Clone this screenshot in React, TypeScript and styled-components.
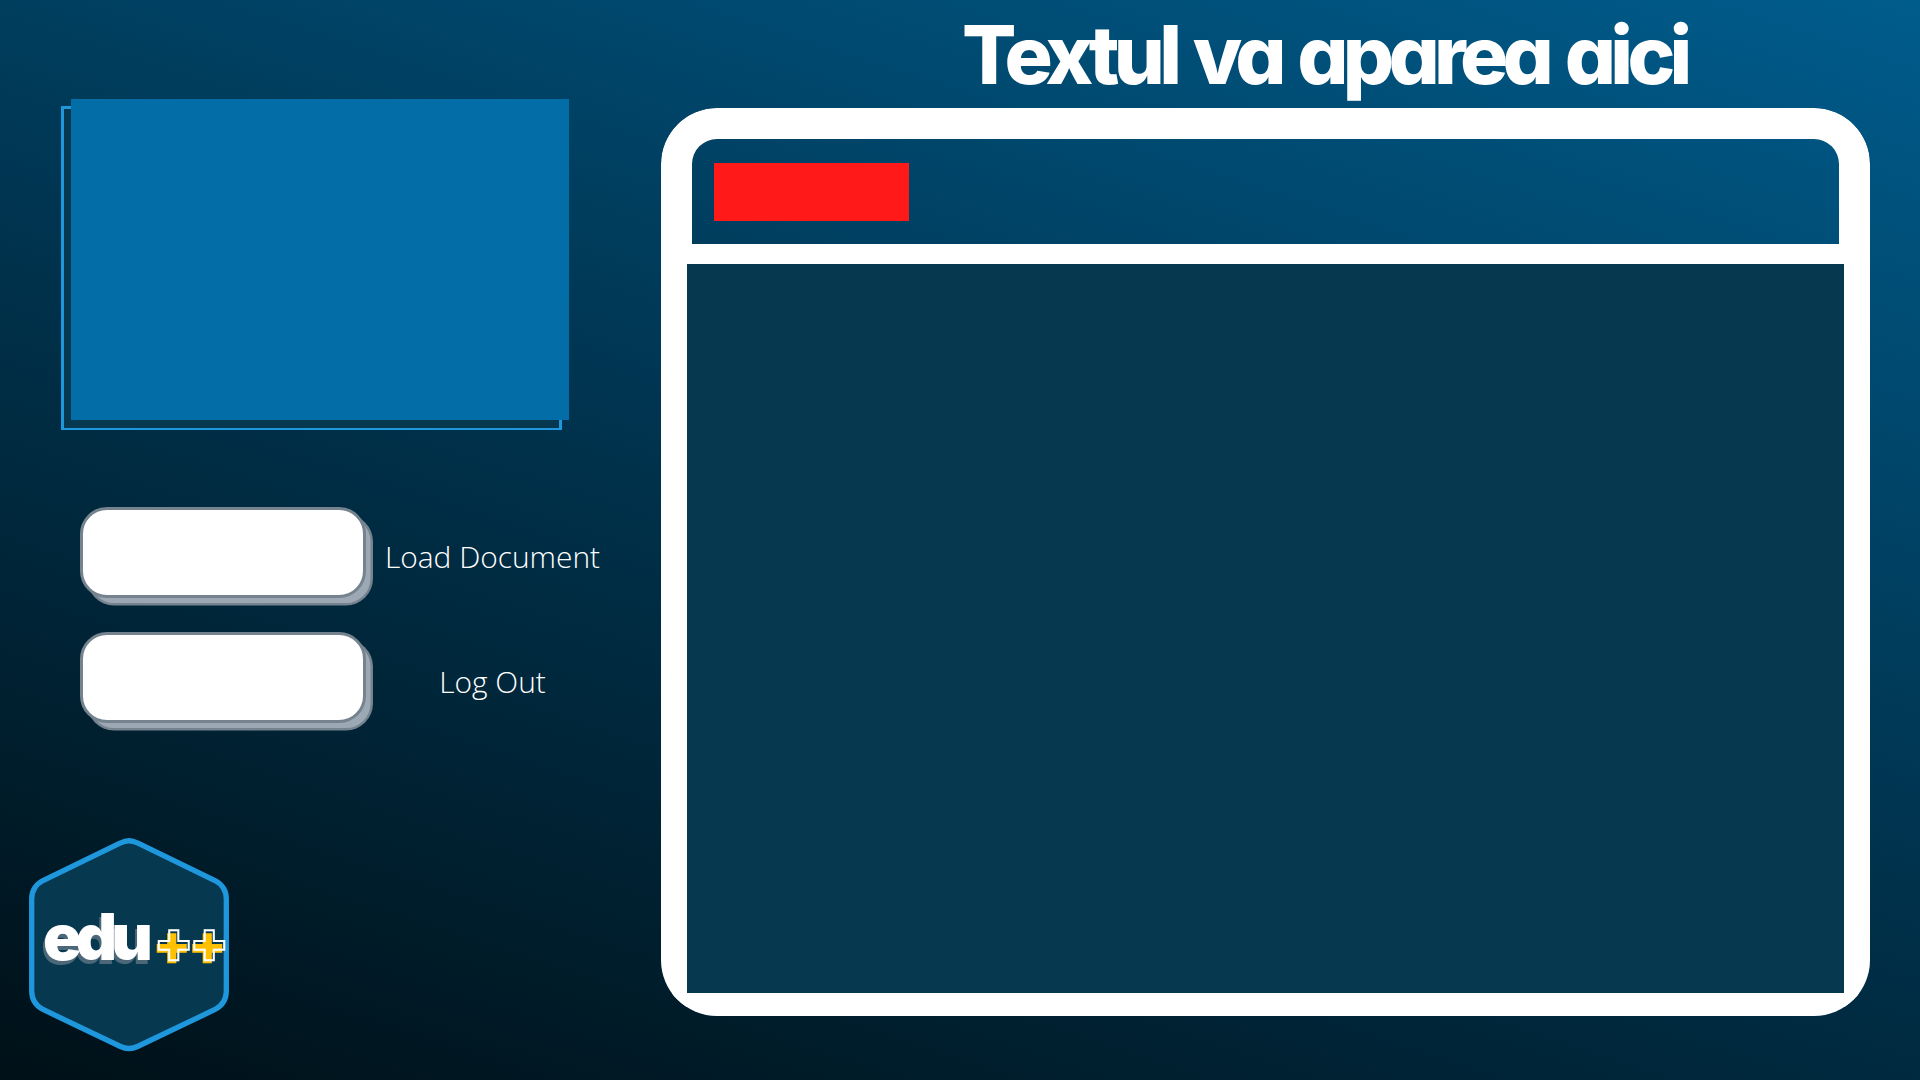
import React from "react";
import styled, { createGlobalStyle } from "styled-components";

const GlobalStyle = createGlobalStyle`
  * { box-sizing: border-box; }
  body { margin: 0; overflow: hidden; }
`;

const Screen = styled.div`
  display: grid;
  grid-template-columns: 661px 1209px;
  width: 1920px;
  height: 1080px;
  overflow: hidden;
  background: linear-gradient(18deg, #001017 0%, #00334e 50%, #005c8c 100%);
  color: #fff;
  font-family: "Open Sans", "Noto Sans", sans-serif;
`;

const Sidebar = styled.aside`
  display: flex;
  flex-direction: column;
  align-items: flex-start;
`;

const Preview = styled.div`
  position: relative;
  width: 501px;
  height: 324px;
  margin: 106px 0 0 61px;
  border: solid #1f97dd;
  border-width: 3px 3px 2px;
  background: #063850;

  &::after {
    content: "";
    position: absolute;
    top: -10px;
    left: 7px;
    width: 498px;
    height: 321px;
    background: #026da6;
  }
`;

const Actions = styled.div`
  display: flex;
  flex-direction: column;
  gap: 34px;
  margin: 77px 0 0 80px;
`;

const ActionRow = styled.div`
  display: flex;
  align-items: center;
`;

const ActionButton = styled.button`
  width: 286px;
  height: 91px;
  padding: 0;
  border: 3px solid #75838f;
  border-radius: 27px;
  background: #fff;
  box-shadow: 7px 7.5px 0 -2.5px #9ca8b4, 7px 7.5px 0 0 #75838f;
`;

const ActionLabel = styled.span`
  width: 253px;
  padding-top: 8px;
  font-size: 29.9px;
  font-weight: 300;
  line-height: 42px;
  text-align: center;
  white-space: nowrap;
`;

const Logo = styled.div`
  position: relative;
  width: 200px;
  height: 214px;
  margin: 115px 0 0 29px;
`;

const Badge = styled.svg`
  display: block;
`;

const Wordmark = styled.div`
  position: absolute;
  top: 59px;
  left: 14px;
  display: flex;
  align-items: baseline;
  font-family: Inter, "Liberation Sans", sans-serif;
  font-weight: 900;
  line-height: 80px;
  white-space: nowrap;
`;

const Edu = styled.span`
  width: 109px;
  font-size: 64px;
  letter-spacing: -6px;
  text-shadow: -2px 4px 0 #4c6878;
`;

const Pluses = styled.span`
  position: relative;
  top: 5px;
  font-size: 57px;
  letter-spacing: -4px;
  color: #ffc000;

  &::after {
    content: "++";
    position: absolute;
    left: 2px;
    top: -3px;
    color: transparent;
    -webkit-text-stroke: 2px #fff;
  }
`;

const Main = styled.main`
  display: flex;
  flex-direction: column;
`;

const Title = styled.h1`
  height: 108px;
  margin: 0;
  padding: 1px 0 0 301px;
  font-family: Inter, "Liberation Sans", sans-serif;
  font-feature-settings: "cv11" 1;
  font-size: 80.5px;
  font-weight: 800;
  letter-spacing: -5.7px;
  word-spacing: 4.5px;
  line-height: 108px;
  white-space: nowrap;
`;

const Frame = styled.section`
  display: flex;
  flex-direction: column;
  width: 1209px;
  height: 908px;
  border-radius: 56px;
  overflow: hidden;
`;

const Toolbar = styled.header`
  height: 156px;
  padding: 24px 22px;
  border: solid #fff;
  border-width: 31px 31px 20px;
  border-radius: 56px 56px 0 0;
`;

const Tag = styled.div`
  width: 195px;
  height: 58px;
  background: #ff1919;
`;

const Content = styled.div`
  flex: 1;
  border: solid #fff;
  border-width: 0 26px 23px;
  background: #063850;
`;

export default function App() {
  return (
    <>
      <GlobalStyle />
      <Screen>
        <Sidebar>
          <Preview />
          <Actions>
            <ActionRow>
              <ActionButton aria-label="Load Document" />
              <ActionLabel>Load Document</ActionLabel>
            </ActionRow>
            <ActionRow>
              <ActionButton aria-label="Log Out" />
              <ActionLabel>Log Out</ActionLabel>
            </ActionRow>
          </Actions>
          <Logo>
            <Badge width="200" height="214" viewBox="0 0 200 214">
              <path
                d="M91.5 5 Q100 0.5 108.5 5 L186 42.5 Q197.3 48.5 197.3 61 V153 Q197.3 165.5 186 171.5 L108.5 208.5 Q100 212.5 91.5 208.5 L14 171.5 Q2.7 165.5 2.7 153 V61 Q2.7 48.5 14 42.5 Z"
                fill="#063850"
                stroke="#1f97dd"
                strokeWidth="5.3"
              />
            </Badge>
            <Wordmark>
              <Edu>edu</Edu>
              <Pluses>++</Pluses>
            </Wordmark>
          </Logo>
        </Sidebar>
        <Main>
          <Title>Textul va aparea aici</Title>
          <Frame>
            <Toolbar>
              <Tag />
            </Toolbar>
            <Content />
          </Frame>
        </Main>
      </Screen>
    </>
  );
}
